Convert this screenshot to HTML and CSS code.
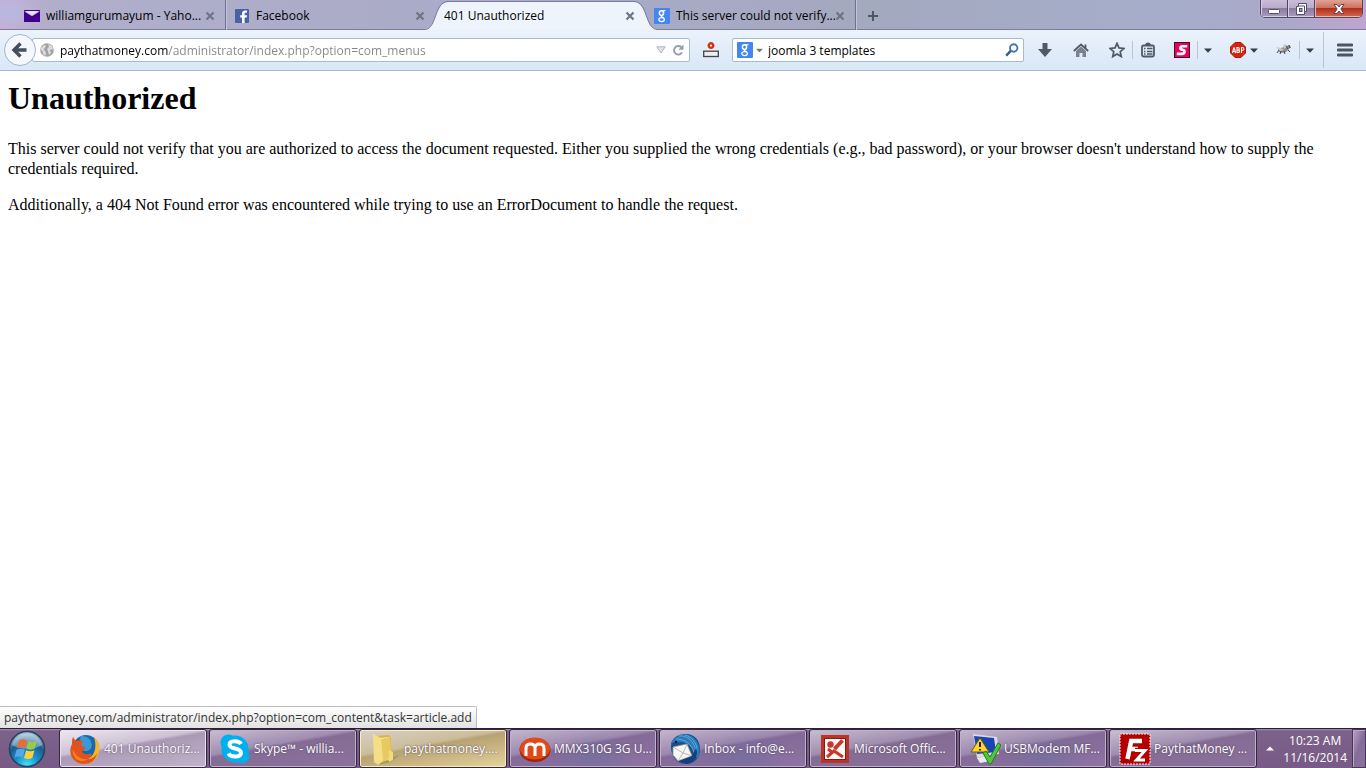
FILE: index.html
```html
<!DOCTYPE html>
<html lang="en">
<head>
<meta charset="utf-8">
<meta name="viewport" content="width=device-width, initial-scale=1">
<title>401 Unauthorized</title>
<link rel="stylesheet" href="styles.css">
</head>
<body>
<svg class="defs" width="0" height="0" aria-hidden="true">
  <defs>
    <symbol id="close" viewBox="0 0 10 10"><path d="M1.500 1.500l7 7M8.500 1.500l-7 7" stroke="#6b7683" stroke-width="2.200" fill="none"/></symbol>
    <symbol id="google" viewBox="0 0 16 16"><rect width="16" height="16" rx="1" fill="#4285f4"/><g fill="none" stroke="#fff"><ellipse cx="7.500" cy="5.100" rx="2.100" ry="2.400" stroke-width="1.500"/><path d="M8.500 2.700h3" stroke-width="1.100"/><path d="M7.800 7.500c-1.600 1.100.8 1.500 1.800 2.600" stroke-width="1.300"/><ellipse cx="7.600" cy="11.600" rx="2.800" ry="2" stroke-width="1.300"/></g></symbol>
    <symbol id="caret" viewBox="0 0 8 5"><path d="M0 .5h8L4 4.700z" fill="currentColor"/></symbol>
  </defs>
</svg>

<header class="browser">
  <div class="tabstrip">
    <nav class="tabs" aria-label="Tabs">
      <div class="tab">
        <svg class="icon16" viewBox="0 0 16 16"><rect y="2" width="16" height="12" fill="#400090"/><path d="M0 3.300l8 5 8-5" fill="#c9c3e2"/><path d="M0 2h16L8 7.300z" fill="#e7e3f2"/><path d="M0 2h16v1H0z" fill="#400090"/></svg>
        <a class="tab-label" href="#mail">williamgurumayum - Yaho...</a>
        <button class="tab-close" aria-label="Close tab"><svg viewBox="0 0 10 10"><use href="#close"/></svg></button>
      </div>
      <div class="tab tab-divided">
        <svg class="icon16" viewBox="0 0 16 16"><rect x="1" y="1" width="14" height="14" rx="1" fill="#4862a3"/><path d="M8 15V9.500H6.200V7.200H8V5.600C8 3.600 9.200 2.500 11 2.500h2v2.300h-1.300c-.8 0-1.100.4-1.100 1.100v1.300H13l-.3 2.300h-2.100V15z" fill="#fff"/></svg>
        <a class="tab-label" href="#facebook">Facebook</a>
        <button class="tab-close" aria-label="Close tab"><svg viewBox="0 0 10 10"><use href="#close"/></svg></button>
      </div>
      <div class="tab tab-active">
        <svg class="edge edge-left" viewBox="0 0 24 30"><path d="M0 30v-1C12 29 10 2 23 2h1v28z" fill="#eef4fc"/><path d="M0 29.500C12 29 9 1.500 23 1.500h1" fill="none" stroke="#7c7d9c"/></svg>
        <svg class="edge edge-right" viewBox="0 0 24 30"><path d="M24 30v-1C12 29 14 2 1 2H0v28z" fill="#eef4fc"/><path d="M24 29.500C12 29 15 1.500 1 1.500H0" fill="none" stroke="#7c7d9c"/></svg>
        <a class="tab-label" href="#top" aria-current="page">401 Unauthorized</a>
        <button class="tab-close" aria-label="Close tab"><svg viewBox="0 0 10 10"><use href="#close"/></svg></button>
      </div>
      <div class="tab">
        <svg class="icon16" viewBox="0 0 16 16"><use href="#google"/></svg>
        <a class="tab-label" href="#search">This server could not verify...</a>
        <button class="tab-close" aria-label="Close tab"><svg viewBox="0 0 10 10"><use href="#close"/></svg></button>
      </div>
      <button class="new-tab tab-divided" aria-label="New tab"><svg class="icon12" viewBox="0 0 12 12"><path d="M6 1v10M1 6h10" stroke="#4b5967" stroke-width="2"/></svg></button>
    </nav>
    <div class="window-controls">
      <button class="win-button" aria-label="Minimize"><svg viewBox="0 0 14 12"><rect x="1.500" y="6.500" width="11" height="4" rx="1" fill="#fff" stroke="#51506a"/></svg></button>
      <button class="win-button" aria-label="Restore"><svg viewBox="0 0 14 12"><path d="M4.500.5h8v8h-2v3h-8v-8h2z" fill="#fff" stroke="#51506a"/><path d="M5 3h5.500v5.500" fill="none" stroke="#51506a"/><rect x="5.500" y="5.500" width="2.500" height="3" fill="#a897bd" stroke="#51506a"/></svg></button>
      <button class="win-button win-close" aria-label="Close"><svg viewBox="0 0 14 12"><path d="M2 1.500h3L7 4l2-2.500h3L8.800 6l3.200 4.500H9L7 8l-2 2.500H2L5.200 6z" fill="#fff" stroke="#5b4450"/></svg></button>
    </div>
  </div>

  <div class="toolbar">
    <button class="back" aria-label="Back"><svg viewBox="0 0 18 16"><path d="M9.500 1.500L3 8l6.500 6.500M4 8h11.500" fill="none" stroke="#434f5c" stroke-width="3.400"/></svg></button>
    <div class="field url-field">
      <svg class="icon14" viewBox="0 0 14 14"><circle cx="7" cy="7" r="6.800" fill="#a3a3a3"/><path d="M1 5l3-3 2 .5L5 5 3.500 6 5 8l1 2-1 3-2-2-.5-3L1 7zM8 1l4 2 1 4-2-1-1 2 1 2-2 2-1-4-1-2 2-2z" fill="#dcdcdc"/></svg>
      <input class="url" type="text" aria-label="Address" value="paythatmoney.com/administrator/index.php?option=com_menus">
      <button class="plain" aria-label="Show history"><svg class="history" viewBox="0 0 10 8"><path d="M.8.800h8.400L5 7z" fill="#dfe4ea" stroke="#a9b4bf"/></svg></button>
      <button class="plain" aria-label="Reload"><svg class="icon12" viewBox="0 0 12 12"><path d="M9.300 3.200A4.300 4.300 0 1 0 10 8.500" fill="none" stroke="#929ead" stroke-width="1.900"/><path d="M11.500.500v5.300H6.300z" fill="#929ead"/></svg></button>
    </div>
    <button class="plain addon" aria-label="Router status"><svg class="icon16" viewBox="0 0 16 16"><circle cx="8" cy="3.600" r="2.300" fill="#fff" stroke="#d62f10" stroke-width="2.400"/><rect x=".7" y="9.200" width="14.600" height="5.300" fill="#eee" stroke="#444" stroke-width="1.300"/></svg></button>
    <div class="field search-field">
      <button class="plain engine" aria-label="Search engine"><svg class="icon16" viewBox="0 0 16 16"><use href="#google"/></svg><svg class="caret-small" viewBox="0 0 8 5"><use href="#caret"/></svg></button>
      <input class="search" type="text" aria-label="Search" value="joomla 3 templates">
      <button class="plain" aria-label="Search"><svg class="icon14" viewBox="0 0 14 14"><circle cx="8.700" cy="5" r="3.700" fill="none" stroke="#3a7bb5" stroke-width="1.900"/><path d="M5.800 7.800L1.200 12.600" stroke="#2a5f95" stroke-width="2.400"/></svg></button>
    </div>
    <div class="tools">
      <button class="tool" aria-label="Downloads"><svg class="icon16" viewBox="0 0 16 16"><path d="M5.500 1h5v6H15l-7 8-7-8h4.500z" fill="#4f5a66"/></svg></button>
      <button class="tool" aria-label="Home"><svg class="icon16" viewBox="0 0 16 16"><path d="M8 4.500l5 4.500v6H9.500v-4h-3v4H3V9z" fill="#7a838d"/><path d="M.8 9L8 2.500 15.200 9M12.500 2.500v4" fill="none" stroke="#4f5a66" stroke-width="1.700"/></svg></button>
      <button class="tool star" aria-label="Bookmark this page"><svg class="icon16" viewBox="0 0 16 16"><path d="M8 1.300l2 4.600 5 .5-3.800 3.300 1.100 4.900L8 12l-4.300 2.600 1.100-4.900L1 6.400l5-.5z" fill="none" stroke="#4f5a66" stroke-width="1.700"/></svg></button>
      <button class="tool tool-ruled" aria-label="Bookmarks"><svg class="icon16" viewBox="0 0 16 16"><rect x="2" y="3.500" width="12" height="11" rx="1.500" fill="none" stroke="#4f5a66" stroke-width="1.800"/><path d="M5 3.500c0-4 6-4 6 0" fill="#4f5a66"/><path d="M4 6.500h1.500M4 9.500h1.500M4 12h1.500M7 6.500h5.500M7 9.500h5.500M7 12h5.500" stroke="#4f5a66" stroke-width="1.300"/></svg></button>
      <button class="tool s-addon" aria-label="S add-on"><svg class="icon16" viewBox="0 0 16 16"><rect x=".5" y=".5" width="15" height="15" fill="#ed0061" stroke="#3b0b20"/><path d="M13.200 4.200H8.300c-2.300 0-2.600 3-.5 3.400l1.400.4c2.200.6 1.400 3.900-1 3.900H2.800" fill="none" stroke="#fff" stroke-width="2.600"/></svg></button>
      <button class="tool tool-menu tool-ruled" aria-label="S add-on menu"><svg class="caret" viewBox="0 0 8 5"><use href="#caret"/></svg></button>
      <button class="tool abp" aria-label="Adblock Plus"><svg class="icon16" viewBox="0 0 16 16"><path d="M5 .5h6L15.500 5v6L11 15.500H5L.5 11V5z" fill="#d4230e" stroke="#a91c0b"/><path d="M2.500 11l1.200-5h.7l1.200 5M3 9.500h2M7 10.500v-5h1q1.300 0 1.300 1.200T8 7.900h-.8H8q1.500 0 1.500 1.300T8 10.500zM11.500 11V5.500h1q1.300 0 1.300 1.400t-1.300 1.400h-1" fill="none" stroke="#fff" stroke-width="1.100"/></svg><svg class="caret" viewBox="0 0 8 5"><use href="#caret"/></svg></button>
      <button class="tool fly" aria-label="Firebug"><svg class="icon16" viewBox="0 0 16 16"><path d="M2 7l6-2 5-2 2 2-3 3-2 2-4 1-3-1z" fill="#8c8c8c"/><path d="M0 5l5 1 3 2-4 1zM7 3l3-1 1 3-3 2z" fill="#c9c9c9"/><path d="M10 4l2 3M12 8l2 2M8 9l1 3M5 9l-1 3M3 8l-2 3M13 3l1 3" stroke="#444"/></svg></button>
      <button class="tool tool-menu tool-ruled" aria-label="Firebug menu"><svg class="caret" viewBox="0 0 8 5"><use href="#caret"/></svg></button>
    </div>
    <button class="menu" aria-label="Open menu"><svg class="icon16" viewBox="0 0 16 16"><path d="M1 3h14M1 8h14M1 13h14" stroke="#4a5763" stroke-width="2.800" stroke-linecap="round"/></svg></button>
  </div>
</header>

<main class="page" id="top">
  <h1>Unauthorized</h1>
  <p>This server could not verify that you are authorized to access the document requested. Either you supplied the wrong credentials (e.g., bad password), or your browser doesn't understand how to supply the credentials required.</p>
  <p>Additionally, a 404 Not Found error was encountered while trying to use an ErrorDocument to handle the request.</p>
  <div class="status" role="status">paythatmoney.com/administrator/index.php?option=com_content&amp;task=article.add</div>
</main>

<footer class="taskbar">
  <button class="start" aria-label="Start">
    <svg viewBox="0 0 38 38">
      <defs><radialGradient id="orb" cx=".5" cy=".95" r=".95"><stop offset="0" stop-color="#3fe4ff"/><stop offset=".35" stop-color="#1790c8"/><stop offset=".65" stop-color="#1b5c8e"/><stop offset="1" stop-color="#b5cfdf"/></radialGradient></defs>
      <circle cx="19" cy="19" r="17.500" fill="url(#orb)" stroke="#27425f" stroke-width="1.500"/>
      <path d="M4 15a15.500 15.500 0 0 1 30 0c-8 5-20 5-30 0z" fill="#fff" opacity=".35"/>
      <path d="M11 10.500c3-1.900 5.600-1.400 8 0l-1.900 7.800c-2.700-1.600-5.300-1.600-8.200 0z" fill="#ee6a32"/>
      <path d="M20.300 11c2.600 1.400 5.400 1.400 8.700-.2l-2.200 7.800c-2.700 1.600-5.400 1.400-8.300-.1z" fill="#98c94c"/>
      <path d="M8.500 19.800c3-1.600 5.500-1.400 8.300 0l-2 7.800c-2.700-1.400-5.200-1.400-8.200 0z" fill="#5ba5e6"/>
      <path d="M18.100 20.200c2.800 1.500 5.400 1.400 8.400.1l-2.200 7.700c-3 1.400-5.400 1.400-8.300 0z" fill="#fdcf40"/>
    </svg>
  </button>
  <div class="tasks">
    <button class="task task-current">
      <svg class="task-icon" viewBox="0 0 32 32"><circle cx="17" cy="15" r="13" fill="#1768ae"/><path d="M12 3c5 0 9 2 10 6 2 4 0 8-4 9-5 1-7-4-8-8z" fill="#3b9ad5"/><path d="M25 4c5 4 7 11 4 18-3 7-10 10-17 8l8-5c6-3 8-12 5-21z" fill="#f8b51c"/><path d="M4 4c1 2 2 3 4 4 2-1 4-1 6 0-2 2-2 3-1 5l3 1c1 1-1 3-3 4 1 4 6 4 9 2 1 3-1 5-4 6 5 0 8-2 10-6-1 7-6 11-13 11C5 31-2 21 3 11c0-3 0-5 1-7z" fill="#e1521c"/><path d="M4 16c2 7 8 11 15 10-4 3-9 2-12 0-2-3-4-6-3-10z" fill="#f58320"/></svg>
      <span>401 Unauthoriz...</span>
    </button>
    <button class="task">
      <svg class="task-icon" viewBox="0 0 32 32"><g fill="#00aff0"><circle cx="16" cy="16" r="13.500"/><circle cx="9.500" cy="9.500" r="8"/><circle cx="22.500" cy="22.500" r="8"/></g><path d="M22 11c-2-3.500-11.500-3.800-11.500.7 0 5 11.500 2.500 11.500 8 0 5-10.500 5-12.500.7" fill="none" stroke="#fff" stroke-width="4"/></svg>
      <span>Skype™ - willia...</span>
    </button>
    <button class="task task-folder">
      <svg class="task-icon" viewBox="0 0 32 32"><path d="M20 26l10-4-8 7-14 3z" fill="#776e50" opacity=".4"/><path d="M7 3l13-1 2 3v22l-13 3z" fill="#d6b74c"/><path d="M12 5l9-1v22l-9 2z" fill="#fff7cb"/><path d="M4 1l8 4 2 23-5 4-4-3z" fill="#f5df86"/><path d="M12 6l9-2 1 20-8 5z" fill="#e7c960"/><path d="M20 17l4 2v8l-4 2z" fill="#f2dc75"/></svg>
      <span>paythatmoney....</span>
    </button>
    <button class="task task-glow">
      <svg class="task-icon" viewBox="0 0 32 32"><ellipse cx="16" cy="17" rx="15.500" ry="12" fill="#a02408"/><ellipse cx="16" cy="15.500" rx="15" ry="11" fill="#e04a18"/><path d="M7 23v-8q0-4 4.500-4t4.500 4v8M16 15q0-4 4.500-4t4.500 4v8" fill="none" stroke="#fff" stroke-width="3"/></svg>
      <span>MMX310G 3G U...</span>
    </button>
    <button class="task task-glow">
      <svg class="task-icon" viewBox="0 0 32 32"><path d="M2 13C2 5 9 1 17 1c9 0 14 7 14 15 0 9-6 15-14 15C8 31 2 24 2 13z" fill="#174f8f"/><path d="M2 10C7 1 18-1 25 5c6 6 7 14 3 21-2-8-5-13-12-16-5-2-10 0-14 0z" fill="#2c79bb"/><path d="M10 3c8-1 15 5 17 15M16 2c7 2 12 8 12 15M7 6c9 0 16 5 18 14" fill="none" stroke="#5aa9da"/><path d="M4 14l14-3 5 12-14 5-5-6z" fill="#f6f6f3" stroke="#9a9a9a" stroke-width=".8"/><path d="M4 14l10 6 4-9M23 23l-9-3-5 8" fill="none" stroke="#aaa" stroke-width=".8"/><path d="M10 28l13-5 4-8c3 6-1 14-9 16z" fill="#143f79"/><circle cx="7" cy="9" r="1.300" fill="#111"/></svg>
      <span>Inbox - info@e...</span>
    </button>
    <button class="task">
      <svg class="task-icon" viewBox="0 0 32 32"><rect x="2" y="2" width="28" height="28" fill="#bd3328"/><rect x="5.500" y="5.500" width="21" height="21" fill="#fff7f2" stroke="#7e1c17"/><circle cx="11.500" cy="11.500" r="3.200" fill="#c8372d"/><path d="M23.500 7.500L15.500 16" stroke="#c8372d" stroke-width="4"/><path d="M8 24l7-6 9 6M9 16l5 4" stroke="#c8372d" stroke-width="3" fill="none"/></svg>
      <span>Microsoft Offic...</span>
    </button>
    <button class="task task-glow">
      <svg class="task-icon" viewBox="0 0 32 32"><path d="M4 1l24 3 2 17-22 4z" fill="#d9dce2"/><path d="M5 3l20 2 2 14-19 2z" fill="#1744b7"/><path d="M8 25l11-2 3 5-11 2z" fill="#e8e9ec"/><path d="M11 5l9 14H2z" fill="#ffd32c" stroke="#725b00"/><path d="M11 9v5M11 16v1.500" stroke="#222" stroke-width="2"/><path d="M14 20l3-2 4 6 8-14 3 2-10 19h-2z" fill="#4fc73b" stroke="#267b20"/></svg>
      <span>USBModem MF...</span>
    </button>
    <button class="task">
      <svg class="task-icon" viewBox="0 0 32 32"><rect x="1" y="1" width="30" height="30" fill="#b30000" stroke="#eee" stroke-dasharray="2 1"/><path d="M8.500 26l3.700-18H23M10 16h9" stroke="#fff" stroke-width="4.500" fill="none"/><path d="M16 17.500h10l-8.500 9.500H26" stroke="#b30000" stroke-width="5.500" fill="none"/><path d="M16 17.500h10l-8.500 9.500H26" stroke="#fff" stroke-width="3" fill="none"/></svg>
      <span>PaythatMoney ...</span>
    </button>
  </div>
  <div class="tray">
    <button class="plain" aria-label="Show hidden icons"><svg class="tray-arrow" viewBox="0 0 8 5"><path d="M0 4.500h8L4 .5z" fill="#fff"/></svg></button>
    <time class="clock" datetime="2014-11-16T10:23"><span>10:23 AM</span><span>11/16/2014</span></time>
    <button class="desktop" aria-label="Show desktop"></button>
  </div>
</footer>
</body>
</html>
```
FILE: styles.css
```css
* { box-sizing: border-box; }

body {
  margin: 0;
  min-height: 100vh;
  display: flex;
  flex-direction: column;
  background: #fff;
  color: #000;
  font: 12px/16px "Open Sans", "Noto Sans", sans-serif;
}

button, input {
  margin: 0;
  padding: 0;
  border: 0;
  background: none;
  color: inherit;
  font: inherit;
}

a { color: inherit; text-decoration: none; }
svg { display: block; flex: none; }
.defs { position: absolute; }
.icon16 { width: 16px; height: 16px; }
.icon14 { width: 14px; height: 14px; }
.icon12 { width: 12px; height: 12px; }
.plain { display: flex; align-items: center; flex: none; }

/* Tab strip */
.tabstrip {
  display: flex;
  justify-content: space-between;
  align-items: flex-start;
  height: 30px;
  padding: 0 3px 0 15px;
  border-bottom: 1px solid #7c7d9c;
  background:
    radial-gradient(ellipse 30px 22px at 8px 12px, #b7b9e0, transparent),
    linear-gradient(to right, #cbadd4 0, #b0aecb 50px, #aaabc8 35%, #a3a9bf 65%, #a5adca 85%, #aaa8c8 94%, #bfa5d0 100%);
}
.tabs { display: flex; flex: 0 1 881px; min-width: 0; }
.tab {
  position: relative;
  display: flex;
  align-items: center;
  flex: 0 1 210px;
  min-width: 0;
  height: 30px;
  padding: 2px 10px 0 9px;
}
.tab-divided { box-shadow: inset 1px 0 #70718c, inset 2px 0 #c3c4dc; }
.tab-label { position: relative; flex: 1; min-width: 0; overflow: hidden; white-space: nowrap; }
.icon16 + .tab-label { margin-left: 6px; }
.tab-close { position: relative; width: 10px; height: 10px; flex: none; }
.tab-active {
  z-index: 1;
  background: linear-gradient(transparent 1px, #7c7d9c 1px, #7c7d9c 2px, #eef4fc 2px) 14px 0 / calc(100% - 24px) 30px no-repeat;
}
.edge { position: absolute; top: 0; width: 24px; height: 30px; }
.edge-left { left: -10px; }
.edge-right { right: -12px; }
.new-tab { display: flex; align-items: center; width: 40px; height: 30px; padding: 2px 0 0 12px; }

.window-controls {
  display: flex;
  flex: none;
  height: 18px;
  border: 1px solid #50455f;
  border-top: 0;
  border-radius: 0 0 5px 5px;
  overflow: hidden;
  box-shadow: 0 0 1px #fff;
}
.win-button {
  display: flex;
  justify-content: center;
  align-items: center;
  width: 27px;
  border-right: 1px solid #50455f;
  background: linear-gradient(#c9bed7, #b9abc9 45%, #8c7c9e 50%, #aa9bc0);
  box-shadow: inset 1px -1px #d9cfe4;
}
.win-button svg { width: 14px; height: 12px; }
.win-close { width: 47px; border: 0; background: linear-gradient(#e0a294, #cf7260 45%, #b0301c 50%, #d6684e); box-shadow: inset 1px -1px #edb6a8; }

/* Navigation toolbar */
.toolbar {
  display: flex;
  align-items: center;
  height: 41px;
  padding: 0 0 0 4px;
  border-bottom: 1px solid #a5bad2;
  background: linear-gradient(#ebf2fb, #d9e7f7);
}
.back {
  position: relative;
  z-index: 1;
  display: flex;
  align-items: center;
  justify-content: center;
  flex: none;
  width: 32px;
  height: 32px;
  margin-right: -4px;
  border: 1px solid #a0b4ca;
  border-radius: 50%;
  background: #f4f8fd;
}
.back svg { width: 18px; height: 16px; }
.field {
  display: flex;
  align-items: center;
  height: 24px;
  border: 1px solid #a6bbd2;
  border-radius: 2px;
  background: #fff;
}
.url-field { flex: 1; min-width: 0; gap: 6px; padding: 0 5px 0 7px; }
.url {
  flex: 1;
  min-width: 0;
  height: 20px;
  background: linear-gradient(to right, #000 108px, #858585 108px);
  -webkit-background-clip: text;
  background-clip: text;
  -webkit-text-fill-color: transparent;
}
.history { width: 10px; height: 8px; }
.addon { margin: 0 13px; }
.search-field { flex: 0 1 292px; min-width: 0; padding: 0 4px; }
.search { flex: 1; min-width: 0; height: 20px; margin-left: 5px; }
.engine { gap: 3px; color: #777; }
.caret-small { width: 7px; height: 5px; }
.caret { width: 8px; height: 5px; }

.tools { display: flex; align-items: center; margin-left: 13px; color: #333c45; }
.tool { display: flex; align-items: center; justify-content: center; gap: 4px; flex: none; width: 36px; height: 18px; }
.tool:first-child { width: 16px; margin-right: 10px; }
.tools .star { width: 30px; margin-left: 3px; }
.tool-ruled { width: 31px; border-left: 1px solid #b8c5d5; }
.tools .tool-menu { width: 20px; }
.s-addon { width: 30px; margin-left: 4px; }
.abp { width: 50px; margin-left: 2px; }
.fly { width: 30px; }
.menu {
  display: flex;
  align-items: center;
  justify-content: center;
  flex: none;
  width: 43px;
  height: 36px;
  margin-left: 4px;
  border-left: 1px solid #b8c5d5;
}

/* Document */
.page {
  position: relative;
  flex: 1;
  padding: 9px 8px 32px;
  font: 16px/20px "Liberation Serif", "Times New Roman", serif;
}
h1 { margin: 0 0 22px; font-size: 32px; line-height: 37px; }
p { margin: 0 0 16px; }
.status {
  position: absolute;
  left: 0;
  bottom: 0;
  height: 22px;
  padding: 2px 4px 0;
  border: solid #bcbcbc;
  border-width: 1px 1px 0 0;
  border-radius: 0 2px 0 0;
  background: linear-gradient(#fff, #e2e2e2);
  color: #333;
  font: 12px/18px "Open Sans", "Noto Sans", sans-serif;
  white-space: nowrap;
}

/* Taskbar */
.taskbar {
  display: flex;
  height: 40px;
  border-top: 1px solid #2c2038;
  background: linear-gradient(#a58fb4, #7c6189 2px, #775b86);
  color: #fff;
}
.start { flex: none; width: 59px; padding-left: 8px; }
.start svg { width: 38px; height: 38px; }
.tasks { display: flex; gap: 2px; flex: 1; min-width: 0; }
.task {
  display: flex;
  align-items: center;
  gap: 3px;
  flex: 0 1 148px;
  min-width: 0;
  height: 39px;
  padding: 0 4px 0 9px;
  border: 1px solid #35253f;
  border-radius: 3px;
  overflow: hidden;
  background: linear-gradient(170deg, #c9bfd1, #a08db0 40%, #856c95 45%, #8b729c);
  box-shadow: inset 0 0 0 1px #c0b1ca;
  text-align: left;
  white-space: nowrap;
  text-shadow: 0 0 2px #4a3a58;
}
.task-current { background: linear-gradient(170deg, #eee9f0, #cdc1d4 40%, #ab9ab6 45%, #c1b3ca); box-shadow: inset 0 0 0 1px #e9e2ed; }
.task-folder { background: linear-gradient(170deg, #d9d0c8, #cbbd9a 40%, #b7a273 45%, #e4d49c); box-shadow: inset 0 0 0 1px #f7eebd; }
.task-glow { background: radial-gradient(ellipse 44px 24px at 84px 28px, rgb(104 112 160 / 50%), transparent), linear-gradient(170deg, #c3b7cd, #9c88ae 40%, #836a98 45%, #8f74a2); }
.task-icon { width: 32px; height: 32px; }
.tray { display: flex; align-items: center; flex: none; gap: 9px; }
.tray-arrow { width: 8px; height: 5px; }
.clock { display: flex; flex-direction: column; align-items: center; line-height: 17px; }
.desktop { width: 14px; height: 39px; margin-left: -4px; border: 1px solid #493755; background: linear-gradient(110deg, #b8a4c6, #866c99 50%, #8c729d); box-shadow: inset 1px 1px #b9a9c5; }
```
